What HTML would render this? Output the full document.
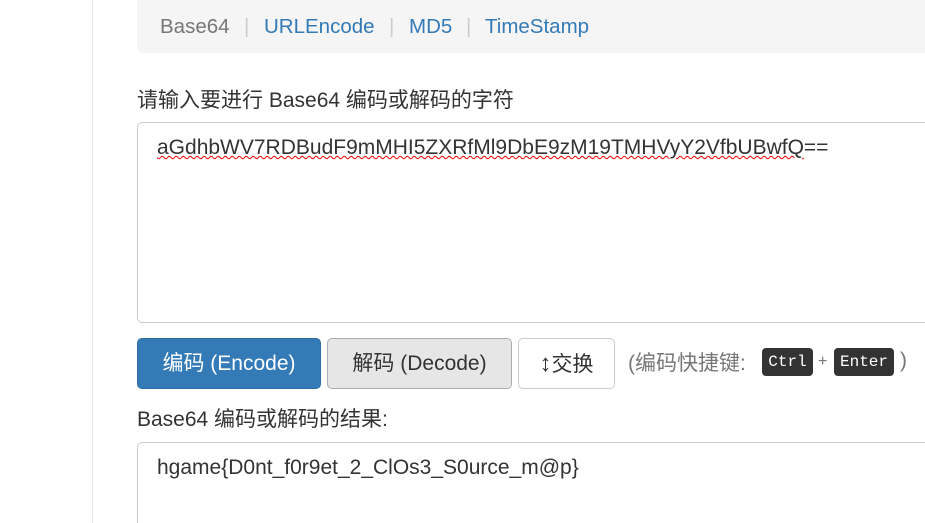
<!DOCTYPE html><html><head><meta charset="utf-8"><style>
html,body{margin:0;width:925px;height:523px;overflow:hidden}
body{background:#fff;font-family:"Liberation Sans","Noto Sans CJK SC",sans-serif;color:#333;position:relative}
.side{position:absolute;left:0;top:0;width:92px;height:523px;border-right:1px solid #e8e8e8;background:#fff}
.bc{position:absolute;left:137px;top:-6px;width:788px;height:59px;background:#f5f5f5;border-radius:6px 0 0 6px;font-size:20.5px;line-height:20px}
.bc span{position:absolute;top:23px}
a{color:#337ab7}
.sep{color:#ccc}
.lbl{position:absolute;left:137px;font-size:21px}
.ta{position:absolute;left:137px;width:788px;border:1px solid #ccc;border-right:none;border-radius:5px 0 0 5px;box-sizing:border-box;font-size:21px;padding:13px 19px}
.btn{position:absolute;top:338px;height:51px;box-sizing:border-box;border-radius:5px;font-size:21px;line-height:49px;text-align:center;border:1px solid #ccc}
kbd{position:absolute;top:348px;height:28px;background:#333;color:#fff;font-family:"Liberation Mono",monospace;font-size:16px;line-height:28px;border-radius:4px;text-align:center}
</style></head><body>
<div class="side"></div>
<div class="bc">
<span style="left:23px;color:#777">Base64</span>
<span class="sep" style="left:107px">|</span>
<span style="left:127px"><a>URLEncode</a></span>
<span class="sep" style="left:252px">|</span>
<span style="left:272px"><a>MD5</a></span>
<span class="sep" style="left:329px">|</span>
<span style="left:348px"><a>TimeStamp</a></span>
</div>
<div class="lbl" style="top:84px">请输入要进行 Base64 编码或解码的字符</div>
<div class="ta" style="top:122px;height:201px"><span style="text-decoration:underline wavy #e00;text-decoration-thickness:1px">aGdhbWV7RDBudF9mMHI5ZXRfMl9DbE9zM19TMHVyY2VfbUBwfQ</span>==</div>
<div class="btn" style="left:137px;width:184px;background:#337ab7;border-color:#2e6da4;color:#fff">编码 (Encode)</div>
<div class="btn" style="left:327px;width:185px;background:#e6e6e6;border-color:#adadad">解码 (Decode)</div>
<div class="btn" style="left:518px;width:97px;background:#fff"><span style="font-size:24px">↕</span>交换</div>
<div style="position:absolute;left:628px;top:347px;font-size:21px;color:#777">(编码快捷键:</div>
<kbd style="left:762px;width:51px">Ctrl</kbd>
<div style="position:absolute;left:818px;top:353px;font-size:16px;color:#777">+</div>
<kbd style="left:834px;width:60px">Enter</kbd>
<div style="position:absolute;left:900px;top:349px;font-size:21px;color:#777">)</div>
<div class="lbl" style="top:403px">Base64 编码或解码的结果:</div>
<div class="ta" style="top:442px;height:81px;border-bottom:none;border-radius:5px 0 0 0">hgame{D0nt_f0r9et_2_ClOs3_S0urce_m@p}</div>
</body></html>
